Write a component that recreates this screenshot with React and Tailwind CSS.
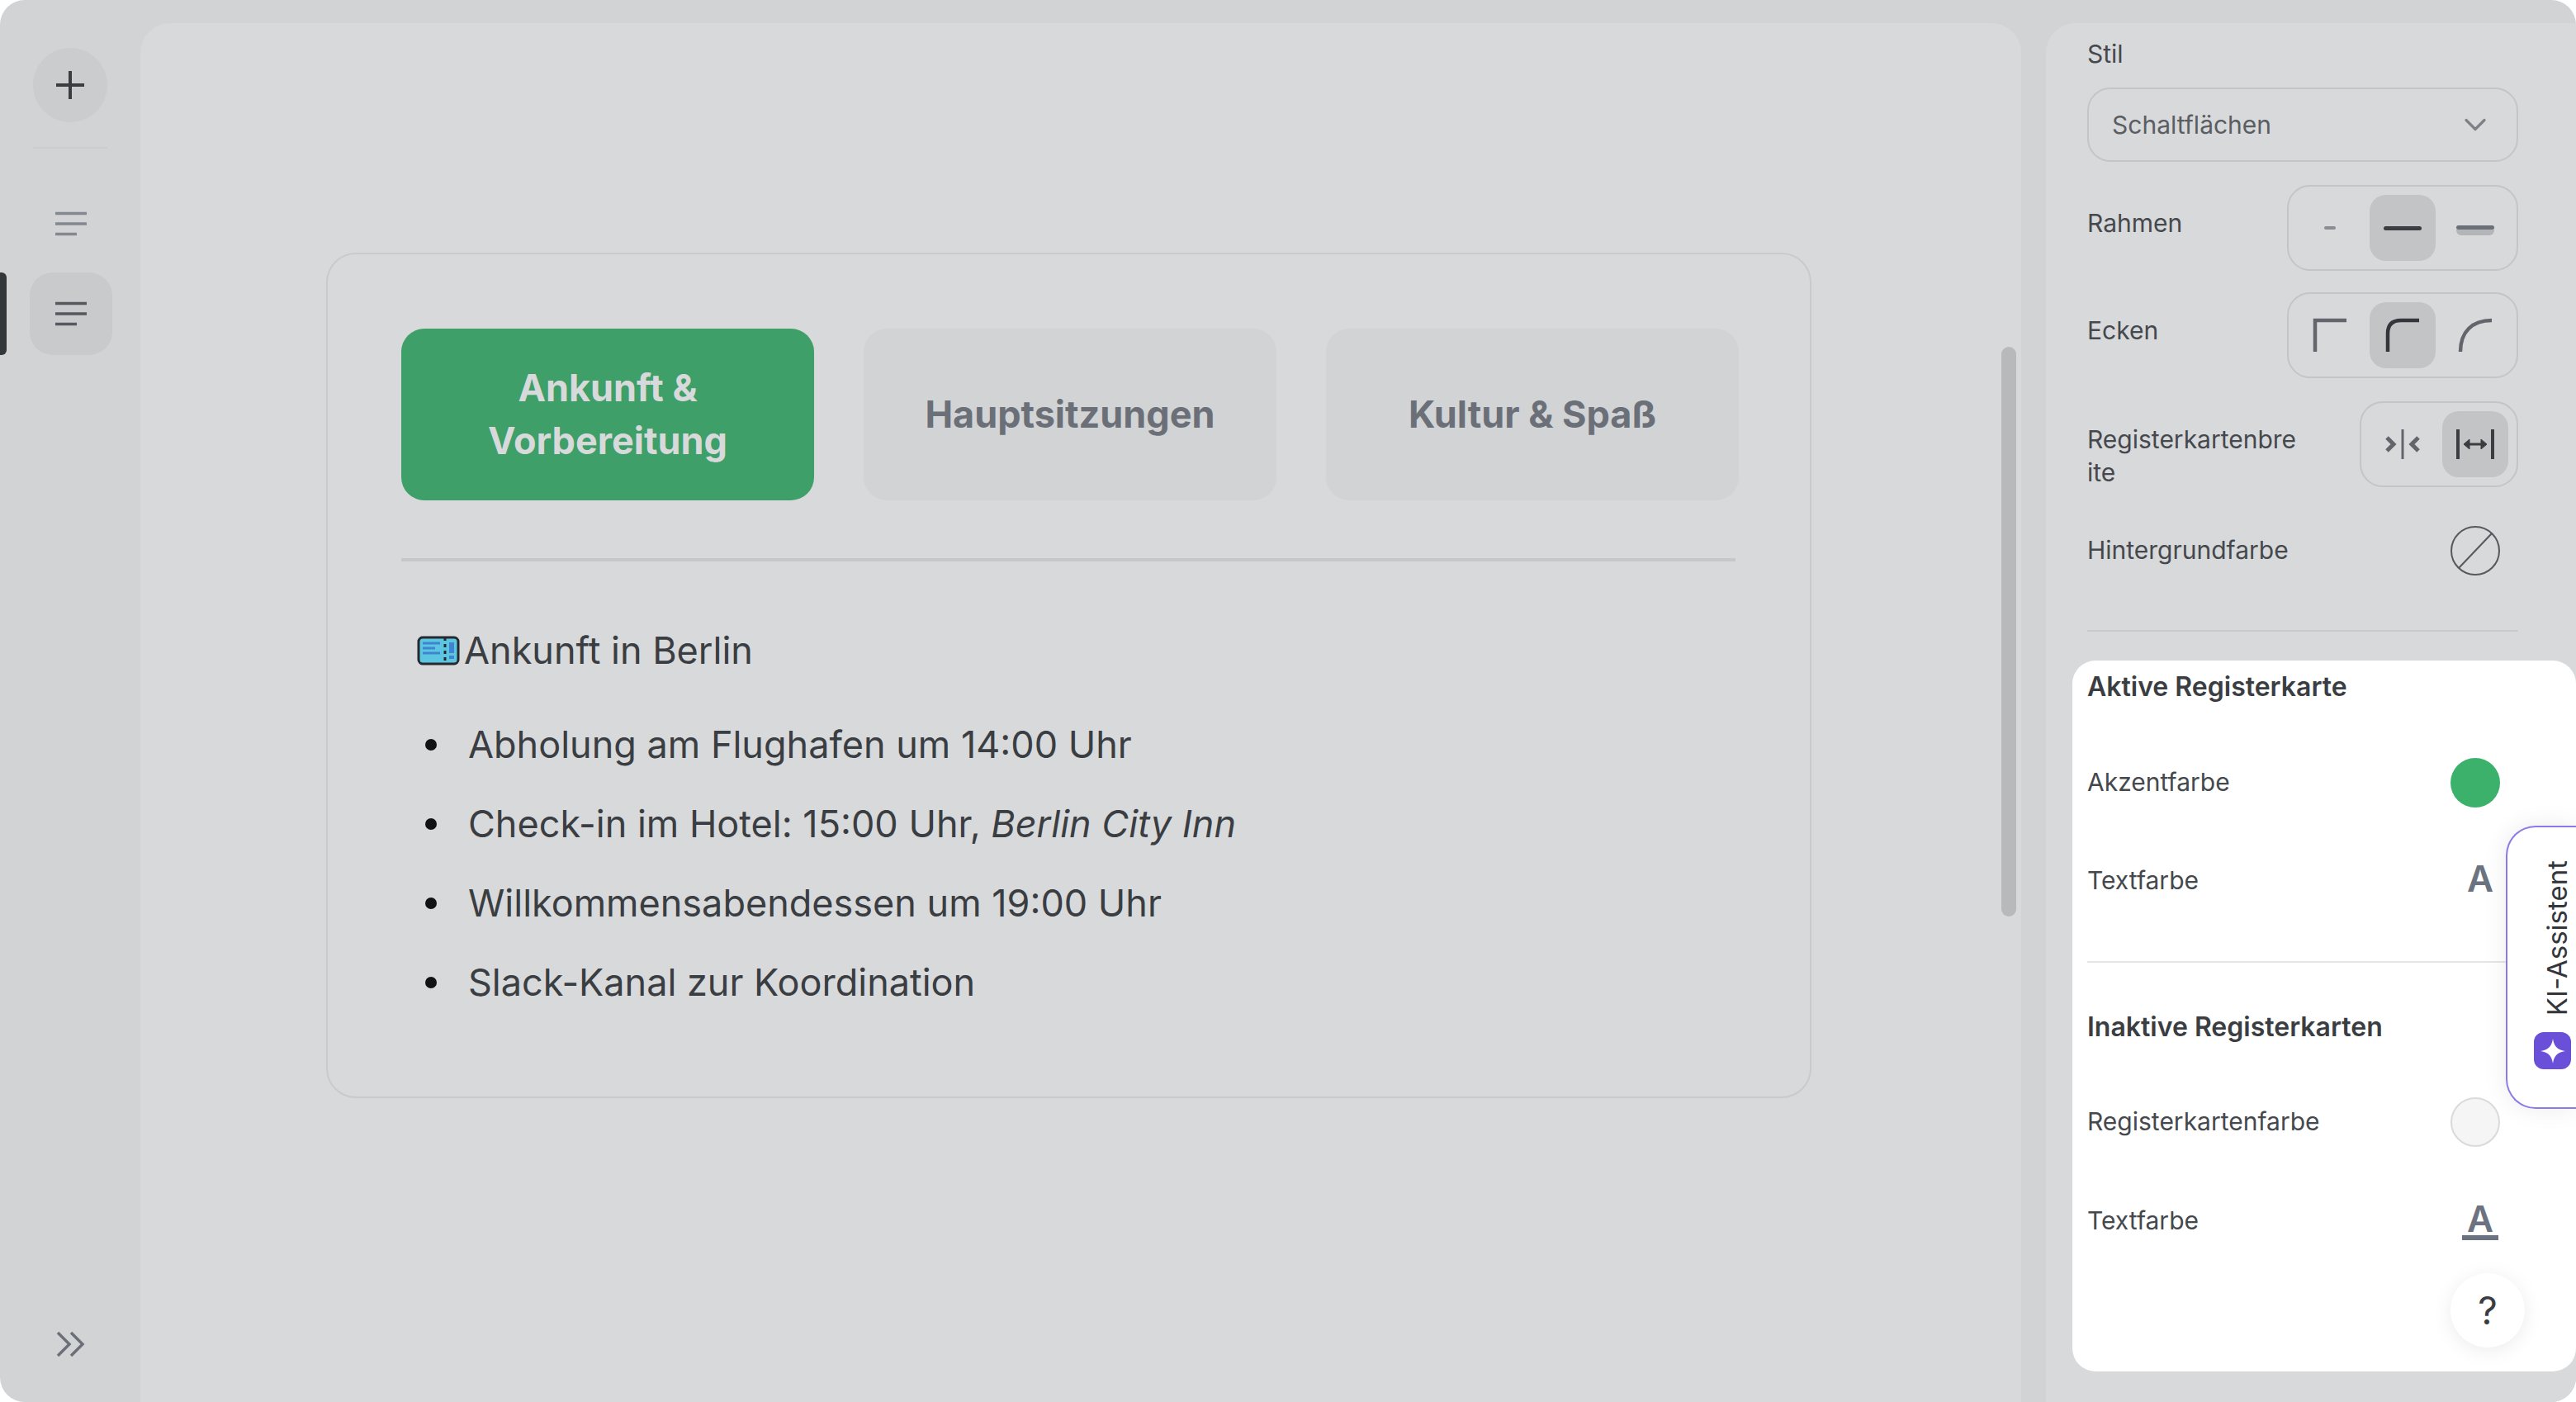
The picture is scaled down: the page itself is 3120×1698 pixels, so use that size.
import { ChevronDown } from "lucide-react";

const font = { fontFamily: "Inter, sans-serif" };

// sidebar text-lines icon, the tone comes from the parent's text colour
const LinesIcon = () => (
  <svg width="40" height="30" viewBox="0 0 40 30" fill="none" stroke="currentColor" strokeWidth="3.5">
    <path d="M1 2.5h38M1 15h38M1 27.5h26" />
  </svg>
);

const Segment = ({ active, children }) => (
  <div className={`flex h-20 w-20 items-center justify-center rounded-[20px] ${active ? "bg-[#c3c4c6]" : ""}`}>
    {children}
  </div>
);

const SegmentGroup = ({ children }) => (
  <div className="flex h-[104px] shrink-0 items-center gap-2 rounded-[28px] border-2 border-[#c4c5c7] px-2.5">
    {children}
  </div>
);

const Corner = ({ d, color }) => (
  <svg width="44" height="44" viewBox="0 0 44 44" fill="none" stroke={color} strokeWidth="4.5">
    <path d={d} />
  </svg>
);

const Label = ({ children, className = "" }) => (
  <span className={`text-[30px] leading-10 text-[#45484c] ${className}`}>{children}</span>
);

// label sits at the top of the row, next to a segment group
const GroupRow = ({ label, children, className = "" }) => (
  <div className={`flex h-[104px] items-start justify-between ${className}`}>
    <Label className="w-[258px] pt-[26px] break-all">{label}</Label>
    <SegmentGroup>{children}</SegmentGroup>
  </div>
);

const Row = ({ label, children, className = "" }) => (
  <div className={`flex h-[60px] items-center justify-between ${className}`}>
    <Label className="pb-0.5">{label}</Label>
    {children}
  </div>
);

const Swatch = ({ className }) => <div className={`h-[60px] w-[60px] rounded-full ${className}`} />;

const TextColorIcon = ({ barClass }) => (
  <div className="flex w-11 flex-col items-center text-[#6b7280]">
    <span className="text-[44px] leading-10 font-semibold">A</span>
    <div className={`h-1.5 w-11 ${barClass}`} />
  </div>
);

const TicketIcon = () => (
  <svg width="52" height="36" viewBox="0 0 52 36" className="shrink-0">
    <rect x="2" y="2" width="48" height="32" rx="5" fill="#5cc6e2" stroke="#26292d" strokeWidth="3" />
    <path d="M7 9h21M7 15h15M7 21h21" stroke="#3f84cf" strokeWidth="3" />
    <path d="M34 2v32" stroke="#26292d" strokeWidth="3" strokeDasharray="4 4" />
    <rect x="39" y="8" width="6" height="13" fill="#3f84cf" />
    <rect x="39" y="24" width="6" height="4" fill="#3f84cf" />
  </svg>
);

const Tab = ({ active, children }) => (
  <div
    className={`flex h-[208px] w-[500px] items-center justify-center rounded-[28px] px-10 text-center text-[45px] leading-16 font-bold ${
      active ? "bg-[#3e9f68] text-[#d8d9db]" : "bg-[#d2d3d5] text-[#6b7078]"
    }`}
  >
    <span>{children}</span>
  </div>
);

const Bullet = ({ children, className = "" }) => (
  <li className={`flex items-center gap-[38px] ${className}`}>
    <span className="h-[14px] w-[14px] shrink-0 rounded-full bg-[#111214]" />
    <span>{children}</span>
  </li>
);

export default function App() {
  return (
    <div style={font} className="h-[1698px] w-[3120px] overflow-hidden bg-white">
      <div className="relative flex h-full overflow-hidden rounded-[30px] bg-[#d2d3d5]">
        {/* left rail */}
        <aside className="flex w-[170px] shrink-0 flex-col pt-[58px]">
          <div className="mx-10 flex h-[90px] w-[90px] items-center justify-center rounded-full bg-[#cbccce] text-[#3a3d41]">
            <svg width="36" height="36" viewBox="0 0 36 36" stroke="currentColor" strokeWidth="4">
              <path d="M18 1v34M1 18h34" />
            </svg>
          </div>
          <div className="mx-10 mt-[30px] h-0.5 bg-[#cbccce]" />
          <div className="mt-[76px] flex h-[38px] justify-center pl-0.5 text-[#83878f]">
            <LinesIcon />
          </div>
          <div className="relative mt-[36px] ml-9 flex h-[100px] w-[100px] items-center justify-center rounded-[28px] bg-[#c9cacc] text-[#55585d]">
            <LinesIcon />
          </div>
          <div className="mt-auto mb-[54px] flex justify-center text-[#6b7078]">
            <svg width="36" height="32" viewBox="0 0 36 32" fill="none" stroke="currentColor" strokeWidth="3.5">
              <path d="M3 2l14 14L3 30M19 2l14 14-14 14" />
            </svg>
          </div>
        </aside>
        <div className="absolute top-[330px] left-0 h-[100px] w-2 rounded-r-md bg-[#33373a]" />

        {/* canvas */}
        <main className="relative mt-7 h-full w-[2278px] shrink-0 rounded-t-[36px] bg-[#d8d9db] pt-[278px] pl-[225px]">
          <section className="h-[1024px] w-[1799px] rounded-[36px] border-2 border-[#c9cacc] pt-[90px] pl-[89px]">
            <div className="flex gap-[60px]">
              <Tab active>Ankunft & Vorbereitung</Tab>
              <Tab>Hauptsitzungen</Tab>
              <Tab>Kultur & Spaß</Tab>
            </div>
            <div className="mt-[70px] h-1 w-[1616px] bg-[#c6c7c9]" />
            <h3 className="mt-[76px] flex items-center gap-[5px] pl-[19px] text-[45px] leading-[64px] font-normal text-[#3a3d41]">
              <TicketIcon />
              Ankunft in Berlin
            </h3>
            <ul className="mt-[50px] pl-[29px] text-[45px] leading-[64px] text-[#3a3d41]">
              <Bullet>Abholung am Flughafen um 14:00 Uhr</Bullet>
              <Bullet className="mt-8">
                Check-in im Hotel: 15:00 Uhr, <em>Berlin City Inn</em>
              </Bullet>
              <Bullet className="mt-8">Willkommensabendessen um 19:00 Uhr</Bullet>
              <Bullet className="mt-8">Slack-Kanal zur Koordination</Bullet>
            </ul>
          </section>
          <div className="absolute top-[392px] right-[6px] h-[690px] w-[18px] rounded-full bg-[#b8b9bb]" />
        </main>

        {/* settings panel */}
        <aside className="relative mt-7 ml-[30px] h-full min-w-0 flex-1 rounded-tl-[36px] bg-[#d8d9db]">
          <div className="pt-[17px] pr-[70px] pl-[50px]">
            <Label className="block">Stil</Label>
            <div className="mt-[21px] flex h-[90px] items-center justify-between rounded-[28px] border-2 border-[#c4c5c7] pr-[28px] pl-7 text-[30px] text-[#5a5d62]">
              Schaltflächen
              <ChevronDown size={44} strokeWidth={1.75} className="text-[#7d8086]" />
            </div>
            <GroupRow label="Rahmen" className="mt-7">
              <Segment>
                <div className="h-1 w-[14px] rounded-sm bg-[#8a8d92]" />
              </Segment>
              <Segment active>
                <div className="h-[5px] w-[46px] rounded-sm bg-[#3a3d41]" />
              </Segment>
              <Segment>
                <div className="mt-[5px] w-[46px]">
                  <div className="h-[5px] rounded-sm bg-[#6b7078]" />
                  <div className="h-[7px] rounded-b-md bg-[#b4b5b8]" />
                </div>
              </Segment>
            </GroupRow>
            <GroupRow label="Ecken" className="mt-[26px]">
              <Segment>
                <Corner d="M4 42V4h38" color="#62666c" />
              </Segment>
              <Segment active>
                <Corner d="M4 42V20Q4 4 20 4h22" color="#33363a" />
              </Segment>
              <Segment>
                <Corner d="M4 42C4 18 18 4 42 4" color="#62666c" />
              </Segment>
            </GroupRow>
            <GroupRow label="Registerkartenbreite" className="mt-7">
              <Segment>
                <svg width="44" height="36" viewBox="0 0 44 36" fill="none" stroke="#62666c">
                  <path d="M22 0v36" strokeWidth="3" />
                  <path d="M3 10l8 8-8 8M41 10l-8 8 8 8" strokeWidth="5" />
                </svg>
              </Segment>
              <Segment active>
                <svg width="46" height="36" viewBox="0 0 46 36" fill="none" stroke="#3a3d41">
                  <path d="M2 0v36M44 0v36" strokeWidth="4" />
                  <path d="M14 18h18" strokeWidth="3" />
                  <path d="M9 18l7-6v12zM37 18l-7-6v12z" fill="#3a3d41" strokeWidth="1" />
                </svg>
              </Segment>
            </GroupRow>
            <Row label="Hintergrundfarbe" className="mt-[47px] pr-[22px]">
              <svg width="60" height="60" viewBox="0 0 60 60" fill="none" stroke="#55585d" strokeWidth="2">
                <circle cx="30" cy="30" r="29" />
                <path d="M10 51L50 9" />
              </svg>
            </Row>
            <div className="mt-[66px] h-0.5 bg-[#c9cacc]" />
          </div>

          {/* highlighted section, stays bright above the dimmed page */}
          <div className="relative mt-[35px] ml-8 h-[861px] rounded-[28px] bg-white pt-3 pr-[70px] pl-[18px]">
            <div className="text-[32px] leading-10 font-semibold text-[#3a3d41]">Aktive Registerkarte</div>
            <Row label="Akzentfarbe" className="mt-[66px] pr-[22px]">
              <Swatch className="bg-[#3cb16b]" />
            </Row>
            <Row label="Textfarbe" className="mt-[59px] pr-6">
              <TextColorIcon barClass="bg-white" />
            </Row>
            <div className="mt-[67px] h-0.5 bg-[#e6e6e7]" />
            <div className="mt-[58px] text-[32px] leading-10 font-semibold text-[#3a3d41]">Inaktive Registerkarten</div>
            <Row label="Registerkartenfarbe" className="mt-[65px] pr-[22px]">
              <Swatch className="border-2 border-[#dadada] bg-[#f5f5f5]" />
            </Row>
            <Row label="Textfarbe" className="mt-[60px] pr-6">
              <TextColorIcon barClass="bg-[#6b7280]" />
            </Row>
            <div className="absolute right-[62px] bottom-[29px] flex h-[90px] w-[90px] items-center justify-center rounded-full bg-white text-[46px] text-[#3a3d41] shadow-[0_4px_24px_rgba(0,0,0,0.08)]">
              ?
            </div>
          </div>

          <div className="absolute top-[972px] right-0 flex h-[343px] w-[85px] flex-col items-center justify-end gap-[20px] rounded-l-[36px] border-2 border-r-0 border-[#8b7be8] bg-white pb-[46px] pl-[26px] shadow-[0_0_30px_rgba(0,0,0,0.08)]">
            <span className="ml-[10px] rotate-180 text-[33px] leading-10 text-[#33363a] [writing-mode:vertical-rl]">KI-Assistent</span>
            <div className="flex h-[45px] w-[45px] shrink-0 items-center justify-center rounded-xl bg-[#6a4fd8]">
              <svg width="32" height="32" viewBox="0 0 32 32" fill="#fff">
                <path d="M16 1c1.5 9 5 13.500 15 15-10 1.500-13.500 6-15 15-1.500-9-5-13.500-15-15C11 14.500 14.500 10 16 1z" />
              </svg>
            </div>
          </div>
        </aside>
      </div>
    </div>
  );
}
